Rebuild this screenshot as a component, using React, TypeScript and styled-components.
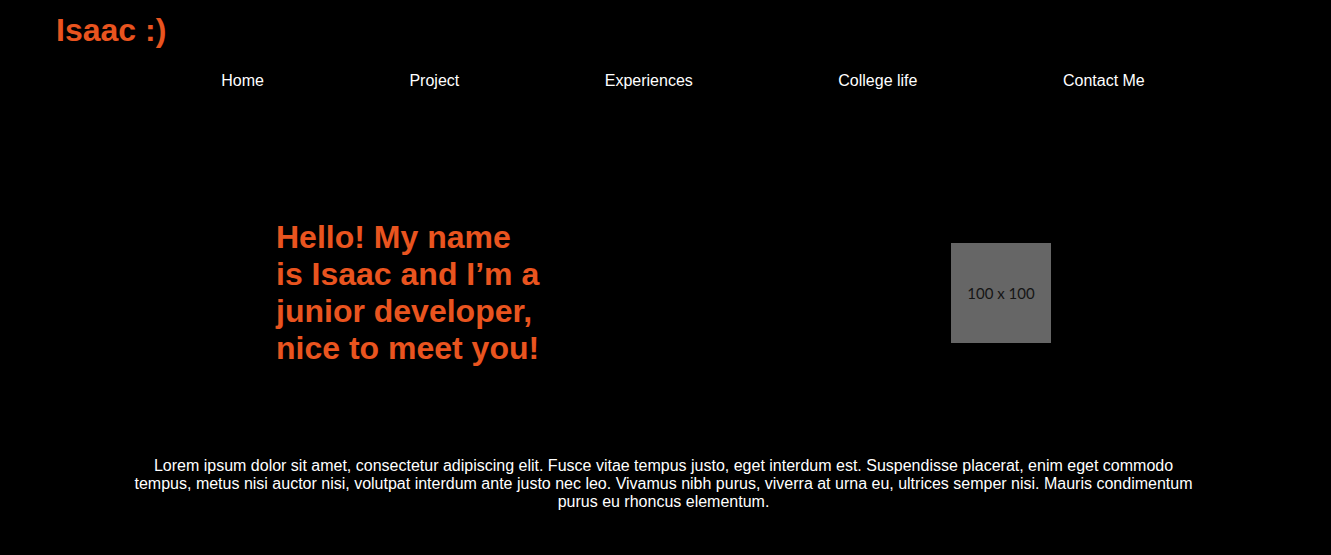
import React from "react";
import styled, { createGlobalStyle } from "styled-components";

const GlobalStyle = createGlobalStyle`
  html, body {
    margin: 0;
    padding: 0;
    background: #000;
  }
  body {
    font-family: "Liberation Sans", Arial, sans-serif;
    color: #fff;
  }
`;

const ORANGE = "#e9541f";

const Page = styled.div`
  min-height: 555px;
  background: #000;
  padding-top: 12px;
  box-sizing: border-box;
`;

const Header = styled.header`
  display: flex;
  flex-direction: column;
`;

const Brand = styled.h1`
  margin: 0 0 0 56px;
  font-size: 32px;
  font-weight: 700;
  line-height: normal;
  color: ${ORANGE};
`;

const Nav = styled.nav`
  margin-top: 23px;
  display: flex;
  justify-content: center;
  gap: 145.5px;
  padding-left: 35px;
`;

const NavLink = styled.a`
  font-size: 16px;
  line-height: normal;
  color: #fff;
  text-decoration: none;
  cursor: pointer;
`;

const Hero = styled.section`
  margin-top: 129px;
  display: flex;
  align-items: center;
  padding-left: 276px;
  gap: 409px;
`;

const Headline = styled.h2`
  margin: 0;
  width: 266px;
  font-size: 32px;
  font-weight: 700;
  line-height: normal;
  color: ${ORANGE};
`;

const Placeholder = styled.div`
  width: 100px;
  height: 100px;
  background: #666;
  display: flex;
  align-items: center;
  justify-content: center;
  font-family: "Lato", "Noto Sans", sans-serif;
  font-size: 15px;
  color: #151515;
`;

const About = styled.p`
  margin: 90px 0 0;
  padding: 0 135px 0 131px;
  text-align: center;
  font-size: 16px;
  line-height: normal;
  color: #fff;
`;

const links = ["Home", "Project", "Experiences", "College life", "Contact Me"];

export default function App() {
  return (
    <>
      <GlobalStyle />
      <Page>
        <Header>
          <Brand>Isaac :)</Brand>
          <Nav>
            {links.map((l) => (
              <NavLink key={l}>{l}</NavLink>
            ))}
          </Nav>
        </Header>
        <Hero>
          <Headline>Hello! My name is Isaac and I’m a junior developer, nice to meet you!</Headline>
          <Placeholder>100 x 100</Placeholder>
        </Hero>
        <About>
          Lorem ipsum dolor sit amet, consectetur adipiscing elit. Fusce vitae tempus justo, eget interdum est. Suspendisse placerat, enim eget commodo tempus, metus nisi auctor nisi, volutpat interdum ante justo nec leo. Vivamus nibh purus, viverra at urna eu, ultrices semper nisi. Mauris condimentum purus eu rhoncus elementum.
        </About>
      </Page>
    </>
  );
}
